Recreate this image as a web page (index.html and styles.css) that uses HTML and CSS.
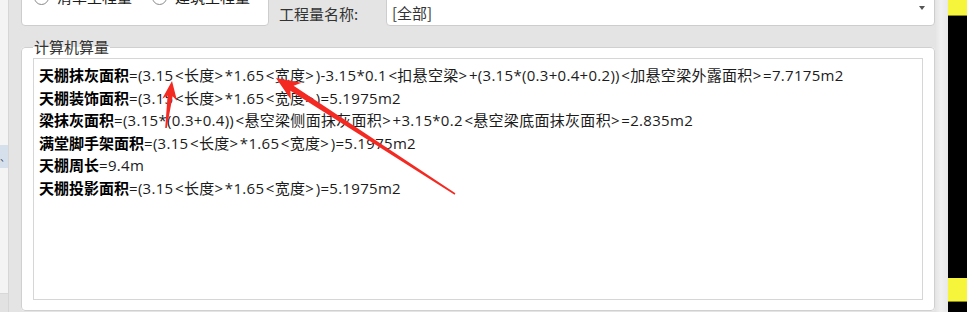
FILE: index.html
```html
<!DOCTYPE html>
<html lang="zh-CN">
<head>
  <meta charset="UTF-8">
  <title>计算机算量</title>
  <link rel="stylesheet" href="styles.css">
</head>
<body>
  <!-- left neighbour pane -->
  <div class="side-left">
    <div class="side-tab">、</div>
    <div class="side-foot"></div>
  </div>

  <div class="main">
    <!-- top filters -->
    <div class="top-row">
      <div class="radio-box">
        <label class="radio"><span class="dot"></span>清单工程量</label>
        <label class="radio"><span class="dot"></span>建筑工程量</label>
      </div>
      <span class="field-label">工程量名称:</span>
      <div class="combo">
        <span>[全部]</span>
        <span class="caret"></span>
      </div>
    </div>

    <!-- result group -->
    <fieldset class="group">
      <legend>计算机算量</legend>
      <div class="calc">
        <p><b>天棚抹灰面积</b>=(3.15<span class="tag">&lt;长度&gt;</span>*1.65<span class="tag">&lt;宽度&gt;</span>)-3.15*0.1<span class="tag">&lt;扣悬空梁&gt;</span>+(3.15*(0.3+0.4+0.2))<span class="tag">&lt;加悬空梁外露面积&gt;</span>=7.7175m2</p>
        <p><b>天棚装饰面积</b>=(3.15<span class="tag">&lt;长度&gt;</span>*1.65<span class="tag">&lt;宽度&gt;</span>)=5.1975m2</p>
        <p><b>梁抹灰面积</b>=(3.15*(0.3+0.4))<span class="tag">&lt;悬空梁侧面抹灰面积&gt;</span>+3.15*0.2<span class="tag">&lt;悬空梁底面抹灰面积&gt;</span>=2.835m2</p>
        <p><b>满堂脚手架面积</b>=(3.15<span class="tag">&lt;长度&gt;</span>*1.65<span class="tag">&lt;宽度&gt;</span>)=5.1975m2</p>
        <p><b>天棚周长</b>=9.4m</p>
        <p><b>天棚投影面积</b>=(3.15<span class="tag">&lt;长度&gt;</span>*1.65<span class="tag">&lt;宽度&gt;</span>)=5.1975m2</p>
      </div>
    </fieldset>
    <div class="status"></div>
  </div>

  <div class="strip"></div>
  <div class="dark">
    <div class="flag top"></div>
    <div class="flag bottom"></div>
  </div>

  <!-- red annotation arrows -->
  <svg class="marks" width="967" height="312" viewBox="0 0 967 312">
    <polygon fill="#f42a22" points="172,81 177,100.8 172.6,96.2 166.8,128.1 165.2,127.9 167.6,95.6 162.2,98.8"/>
    <polygon fill="#f42a22" points="276,78 301.6,82.7 293.6,85.8 455.4,193.3 454.6,194.7 290.4,90.8 290.8,99.5"/>
  </svg>
</body>
</html>
```

FILE: styles.css
```css
body {
  margin: 0;
  height: 312px;
  overflow: hidden;
  display: flex;
  background-color: #e4e4e4;
  font-family: "Noto Sans CJK SC", "Noto Sans", sans-serif;
  font-size: 15px;
  color: #1c1c1c;
  position: relative;
}

/* left pane */
.side-left {
  width: 8px;
  background-color: #f4f4f4;
  border-right: 1px solid #d6d6d6;
  display: flex;
  flex-direction: column;
}

.side-tab {
  margin-top: 145px;
  height: 23px;
  background-color: #d6e0ec;
  font-size: 10px;
  line-height: 23px;
  color: #3a4a60;
  overflow: hidden;
  white-space: nowrap;
}

.side-foot {
  margin-top: auto;
  height: 18px;
  border-top: 1px solid #d8d8d8;
  background-color: #e2e2e2;
}

.main {
  flex: 1;
  padding: 0 1px 0 12px;
  display: flex;
  flex-direction: column;
}

/* top filters */
.top-row {
  height: 26px;
  display: flex;
  align-items: center;
}

.radio-box {
  align-self: flex-start;
  box-sizing: border-box;
  width: 248px;
  height: 46px;
  margin-top: -20px;
  padding: 7px 0 0 12px;
  display: flex;
  align-items: flex-start;
  gap: 20px;
  background: #fff;
  border: 1px solid #cdcdcd;
  border-radius: 4px;
}

.radio {
  display: flex;
  align-items: center;
  gap: 8px;
  line-height: 18px;
}

.dot {
  width: 13px;
  height: 13px;
  border: 1px solid #8a8a8a;
  border-radius: 50%;
  background: #fff;
}

.field-label {
  margin-left: 10px;
  width: 107px;
  color: #333;
}

.combo {
  align-self: flex-start;
  flex: 1;
  box-sizing: border-box;
  height: 46px;
  margin-top: -20px;
  padding: 23px 9px 0 5px;
  display: flex;
  justify-content: space-between;
  line-height: 18px;
  background: #fff;
  border: 1px solid #cdcdcd;
  border-radius: 4px;
  color: #333;
}

.caret {
  margin-top: -14px;
  align-self: center;
  width: 0;
  height: 0;
  border-left: 3.5px solid transparent;
  border-right: 3.5px solid transparent;
  border-top: 4px solid #555;
}

/* result group */
.group {
  margin: 11px 0 0;
  padding: 0 11px 10px;
  min-width: 0;
  background: #fff;
  border: 1px solid #d0d0d0;
  border-radius: 4px;
}

.group legend {
  padding: 0 1px;
  line-height: 20px;
  color: #333;
}

.calc {
  margin-top: 1px;
  height: 235px;
  padding: 5px 5px 0;
  border: 1px solid #d6d6d6;
  background: #fff;
  font-family: "Open Sans", "Noto Sans CJK SC", sans-serif;
}

.calc p {
  margin: 0;
  line-height: 21.5px;
  white-space: nowrap;
  letter-spacing: 0.3px;
}

.calc b {
  font-family: "Noto Sans CJK SC", sans-serif;
  font-weight: 700;
  color: #000;
  letter-spacing: 0;
}

.calc .tag {
  padding: 0 1.5px;
}

.status {
  flex: 1;
  margin-top: 1px;
  background: #e9eef6;
}

/* right edge */
.strip {
  width: 12px;
  background: linear-gradient(90deg, #e6e6e6, #f0f0f0 40%, #e8e8e8);
}

.dark {
  width: 19px;
  background: #000;
  display: flex;
  flex-direction: column;
}

.flag {
  background: #f6f53c;
  border-bottom: 1px solid #8a8a20;
}

.flag.top {
  height: 15px;
}

.flag.bottom {
  height: 23px;
  margin-top: 262px;
}

.marks {
  position: absolute;
  left: 0;
  top: 0;
  pointer-events: none;
}
```
